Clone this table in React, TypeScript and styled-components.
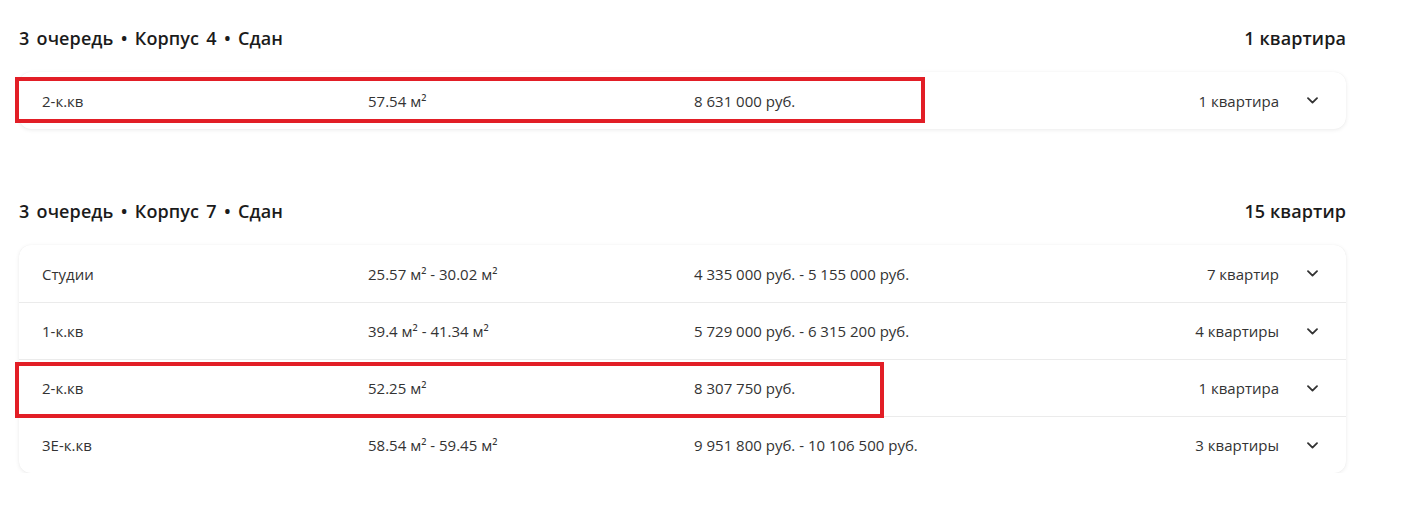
import React from "react";
import styled, { createGlobalStyle } from "styled-components";

const Global = createGlobalStyle`
  html, body { margin: 0; padding: 0; background: #fff; }
  body { font-family: "Open Sans", "Noto Sans", sans-serif; color: #333; }
  * { box-sizing: border-box; }
`;

const Page = styled.div`
  width: 1346px;
  padding: 26px 0 0 19px;
  display: flex;
  flex-direction: column;
  gap: 70px;
`;

const Section = styled.section`
  display: flex;
  flex-direction: column;
  gap: 22px;
`;

const Header = styled.div`
  display: flex;
  justify-content: space-between;
  align-items: center;
  height: 24px;
  font-size: 18px;
  font-weight: 600;
  color: #1b1b1b;
  letter-spacing: 0.1px;
`;

const Title = styled.span`
  word-spacing: 2.4px;
`;

const Card = styled.div`
  position: relative;
  background: #fff;
  border-radius: 12px;
  box-shadow: 0 1px 4px rgba(0, 0, 0, 0.08), 0 0 1px rgba(0, 0, 0, 0.06);
`;

const Row = styled.div`
  display: grid;
  grid-template-columns: 326px 326px 1fr auto 39px;
  align-items: center;
  height: 57px;
  padding: 0 28px 0 23px;
  font-size: 15px;
  color: #333;
  & + & {
    border-top: 1px solid #ebebeb;
  }
`;

const Cell = styled.div`
  white-space: nowrap;
`;

const Count = styled.div`
  text-align: right;
  white-space: nowrap;
`;

const Chevron = styled.div`
  display: flex;
  justify-content: flex-end;
  align-items: center;
`;

const Highlight = styled.div<{ $top: number; $left: number; $w: number; $h: number }>`
  position: absolute;
  top: ${(p) => p.$top}px;
  left: ${(p) => p.$left}px;
  width: ${(p) => p.$w}px;
  height: ${(p) => p.$h}px;
  border: 4px solid #e21e26;
  pointer-events: none;
`;

const ChevronIcon = () => (
  <svg width="11" height="7" viewBox="0 0 11 7" fill="none">
    <path d="M1 1.2 L5.5 5.6 L10 1.2" stroke="#333" strokeWidth="1.8" strokeLinecap="round" strokeLinejoin="round" />
  </svg>
);

type Item = { type: string; area: React.ReactNode; price: string; count: string };

const Area = ({ a, b }: { a: string; b?: string }) => (
  <>
    {a} м²
    {b ? <>{` - ${b} м²`}</> : null}
  </>
);

const sections: { title: string; total: string; items: Item[]; hl: { top: number; left: number; w: number; h: number } }[] = [
  {
    title: "3 очередь • Корпус 4 • Сдан",
    total: "1 квартира",
    items: [{ type: "2-к.кв", area: <Area a="57.54" />, price: "8 631 000 руб.", count: "1 квартира" }],
    hl: { top: 5, left: -4, w: 910, h: 46 },
  },
  {
    title: "3 очередь • Корпус 7 • Сдан",
    total: "15 квартир",
    items: [
      { type: "Студии", area: <Area a="25.57" b="30.02" />, price: "4 335 000 руб. - 5 155 000 руб.", count: "7 квартир" },
      { type: "1-к.кв", area: <Area a="39.4" b="41.34" />, price: "5 729 000 руб. - 6 315 200 руб.", count: "4 квартиры" },
      { type: "2-к.кв", area: <Area a="52.25" />, price: "8 307 750 руб.", count: "1 квартира" },
      { type: "3Е-к.кв", area: <Area a="58.54" b="59.45" />, price: "9 951 800 руб. - 10 106 500 руб.", count: "3 квартиры" },
    ],
    hl: { top: 117, left: -4, w: 869, h: 56 },
  },
];

export default function App() {
  return (
    <>
      <Global />
      <Page>
        {sections.map((s) => (
          <Section key={s.title}>
            <Header>
              <Title>{s.title}</Title>
              <span>{s.total}</span>
            </Header>
            <Card>
              {s.items.map((it, i) => (
                <Row key={i}>
                  <Cell>{it.type}</Cell>
                  <Cell>{it.area}</Cell>
                  <Cell>{it.price}</Cell>
                  <Count>{it.count}</Count>
                  <Chevron>
                    <ChevronIcon />
                  </Chevron>
                </Row>
              ))}
              <Highlight $top={s.hl.top} $left={s.hl.left} $w={s.hl.w} $h={s.hl.h} />
            </Card>
          </Section>
        ))}
      </Page>
    </>
  );
}
